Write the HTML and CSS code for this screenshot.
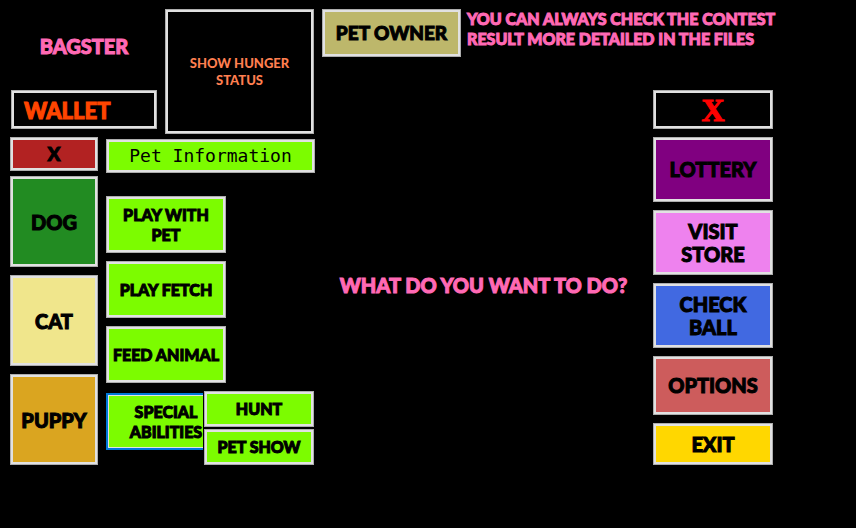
FILE: index.html
```html
<!DOCTYPE html>
<html lang="en">
<head>
<meta charset="utf-8">
<meta name="viewport" content="width=device-width, initial-scale=1">
<title>Bagster</title>
<link rel="stylesheet" href="styles.css">
</head>
<body>
<div class="app">
  <section class="side">
    <header class="top">
      <div class="identity">
        <h1 class="name">BAGSTER</h1>
        <button class="btn wallet" type="button">WALLET</button>
      </div>
      <button class="btn hunger" type="button">SHOW HUNGER STATUS</button>
    </header>
    <div class="panels">
      <div class="pets">
        <button class="btn close-pets" type="button">X</button>
        <div class="pet-list">
          <button class="btn pet dog" type="button">DOG</button>
          <button class="btn pet cat" type="button">CAT</button>
          <button class="btn pet puppy" type="button">PUPPY</button>
        </div>
      </div>
      <div class="actions">
        <button class="btn lime info" type="button">Pet Information</button>
        <div class="action-list">
          <button class="btn lime action" type="button">PLAY WITH PET</button>
          <button class="btn lime action" type="button">PLAY FETCH</button>
          <button class="btn lime action" type="button">FEED ANIMAL</button>
          <div class="special-row">
            <button class="btn lime action special" type="button">SPECIAL ABILITIES</button>
            <div class="submenu">
              <button class="btn lime sub" type="button">HUNT</button>
              <button class="btn lime sub" type="button">PET SHOW</button>
            </div>
          </div>
        </div>
      </div>
    </div>
  </section>
  <main class="main">
    <div class="banner">
      <button class="btn owner" type="button">PET OWNER</button>
      <p class="notice">YOU CAN ALWAYS CHECK THE CONTEST<br>RESULT MORE DETAILED IN THE FILES</p>
    </div>
    <div class="content">
      <p class="prompt">WHAT DO YOU WANT TO DO?</p>
      <nav class="menu">
        <button class="btn close-menu" type="button">X</button>
        <button class="btn tall lottery" type="button">LOTTERY</button>
        <button class="btn tall store" type="button">VISIT<br>STORE</button>
        <button class="btn tall ball" type="button">CHECK<br>BALL</button>
        <button class="btn options" type="button">OPTIONS</button>
        <button class="btn exit" type="button">EXIT</button>
      </nav>
    </div>
  </main>
</div>
</body>
</html>
```
FILE: styles.css
```css
* {
  box-sizing: border-box;
}

body {
  margin: 0;
  background: #000;
  font-family: Lato, "Liberation Sans", sans-serif;
  font-weight: 900;
  -webkit-text-stroke: 1px currentColor;
}

h1,
p {
  margin: 0;
  color: #ff69b4;
  font-weight: 900;
}

.app {
  display: flex;
  gap: 7px;
  padding: 9px 83px 9px 10px;
}

.btn {
  border: 1px solid #adadad;
  border-radius: 0;
  box-shadow: inset 0 0 0 2px #e1e1e1;
  padding: 3px;
  background: #000;
  color: #000;
  font: inherit;
  font-size: 16px;
  line-height: 20px;
  text-align: center;
  -webkit-text-stroke: 1px currentColor;
}

.side {
  flex: none;
}

.top {
  display: flex;
  gap: 8px;
}

.identity {
  display: flex;
  flex-direction: column;
  width: 147px;
  padding: 0 0 5px 1px;
}

.name {
  flex: 1;
  padding-top: 24px;
  font-size: 20px;
  line-height: 26px;
  text-align: center;
}

.wallet {
  min-height: 39px;
  padding: 5px 12px 3px;
  color: #ff4500;
  font-size: 22px;
  line-height: 26px;
  text-align: left;
}

.hunger {
  width: 149px;
  min-height: 125px;
  padding: 3px 20px;
  color: #ff7f50;
  font-size: 13px;
  line-height: 17px;
  -webkit-text-stroke-width: 0;
}

.panels {
  display: flex;
  gap: 8px;
}

.pets {
  display: flex;
  flex-direction: column;
  gap: 5px;
  width: 88px;
  padding-top: 3px;
}

.close-pets {
  min-height: 34px;
  background: #b22222;
  font-size: 19px;
}

.pet-list,
.action-list {
  display: flex;
  flex-direction: column;
  gap: 8px;
}

.pet {
  min-height: 91px;
  font-size: 20px;
}

.dog {
  background: #228b22;
}

.cat {
  background: #f0e68c;
}

.puppy {
  background: #daa520;
}

.actions {
  display: flex;
  flex-direction: column;
  gap: 23px;
  width: 209px;
  padding-top: 5px;
}

.lime {
  background: #7cfc00;
}

.info {
  min-height: 34px;
  font-family: "DejaVu Sans Mono", monospace;
  font-size: 18px;
  font-weight: 400;
  -webkit-text-stroke-width: 0;
}

.action {
  width: 120px;
  min-height: 57px;
}

.special-row {
  position: relative;
  padding-top: 2px;
}

.special {
  border: 2px solid #0078d7;
  box-shadow: inset 0 0 0 1px #e1e1e1;
}

.submenu {
  position: absolute;
  top: 0;
  left: 97px;
  display: flex;
  flex-direction: column;
  gap: 2px;
  width: 111px;
  padding-left: 1px;
  background: #000;
}

.sub {
  min-height: 36px;
}

.main {
  flex: 1;
  min-width: 0;
}

.banner {
  display: flex;
  align-items: flex-start;
  gap: 6px;
  min-height: 81px;
}

.owner {
  flex: none;
  width: 139px;
  min-height: 48px;
  background: #bdb76b;
  font-size: 19px;
}

.notice {
  font-size: 16px;
  line-height: 20px;
  white-space: nowrap;
}

.content {
  display: flex;
  gap: 8px;
}

.prompt {
  flex: 1;
  padding-top: 182px;
  font-size: 20px;
  line-height: 26px;
  text-align: center;
  white-space: nowrap;
}

.menu {
  display: flex;
  flex-direction: column;
  gap: 8px;
  width: 120px;
}

.menu .btn {
  font-size: 20px;
  line-height: 23px;
}

.menu .close-menu {
  min-height: 39px;
  color: #f00;
  font-family: "Liberation Serif", serif;
  font-size: 32px;
  line-height: 26px;
}

.tall {
  min-height: 65px;
}

.lottery {
  background: #800080;
}

.store {
  background: #ee82ee;
}

.ball {
  background: #4169e1;
}

.options {
  min-height: 59px;
  background: #cd5c5c;
}

.exit {
  min-height: 42px;
  background: #ffd700;
}
```
